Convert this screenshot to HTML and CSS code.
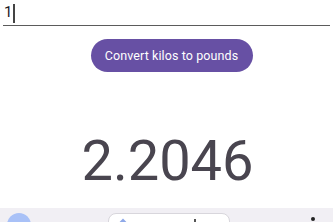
FILE: index.html
```html
<!doctype html>
<html lang="en">

<head>
	<meta charset="UTF-8" />
	<meta name="viewport" content="width=device-width, initial-scale=1.0" />
	<title>Kilos to pounds</title>
	<link rel="stylesheet" href="styles.css">
</head>

<body>
	<div class="screen">
		<div class="field">
			<span class="field-value">1</span><span class="caret"></span>
		</div>
		<div class="actions">
			<button class="convert-btn">Convert kilos to pounds</button>
		</div>
		<div class="result">2.2046</div>
	</div>
	<div class="bottom-bar">
		<div class="avatar"></div>
		<div class="search-pill">
			<svg class="pill-icon" width="10" height="10" viewBox="0 0 10 10">
				<path d="M2 6 L5 3 L8 6" fill="none" stroke="#8fa9e8" stroke-width="2" />
			</svg>
			<span class="pill-mark"></span>
		</div>
		<div class="menu-dot"></div>
	</div>
</body>

</html>
```

FILE: styles.css
```css
* {
	margin: 0;
	padding: 0;
	box-sizing: border-box;
}

body {
	font-family: Roboto, "Noto Sans", sans-serif;
	background-color: #ffffff;
	width: 333px;
	height: 222px;
	overflow: hidden;
	display: flex;
	flex-direction: column;
}

.screen {
	height: 208px;
	flex-shrink: 0;
	display: flex;
	flex-direction: column;
}

.field {
	margin: 0 3px;
	height: 26px;
	padding: 4px 0 0 1px;
	border-bottom: 1.5px solid #5b5b5b;
	display: flex;
	align-items: flex-start;
	font-size: 15px;
	color: #1c1b1f;
}

.field-value {
	line-height: 17px;
}

.caret {
	width: 1.5px;
	height: 19px;
	margin-left: 1px;
	background-color: #444;
}

.actions {
	display: flex;
	justify-content: center;
	margin-top: 13px;
	padding-left: 10px;
}

.convert-btn {
	width: 162px;
	height: 33px;
	border: none;
	border-radius: 17px;
	background-color: #6750a4;
	color: #ffffff;
	font-family: Roboto, sans-serif;
	font-weight: 400;
	font-size: 12.5px;
	letter-spacing: 0.1px;
}

.result {
	margin-top: 61px;
	text-align: center;
	font-size: 56px;
	line-height: 56px;
	color: #49454f;
	padding-left: 2px;
}

.bottom-bar {
	height: 14px;
	overflow: hidden;
	background-color: #f1eff4;
	display: flex;
	align-items: flex-start;
	padding-top: 5px;
}

.avatar {
	width: 24px;
	height: 24px;
	flex-shrink: 0;
	margin-left: 7px;
	border-radius: 50%;
	background-color: #a9c1f7;
}

.search-pill {
	width: 122px;
	height: 24px;
	flex-shrink: 0;
	margin-left: 77px;
	border: 1px solid #d8d6dc;
	border-radius: 8px;
	background-color: #ffffff;
	display: flex;
	align-items: flex-start;
	padding: 3px 0 0 9px;
}

.pill-mark {
	width: 2px;
	height: 4px;
	margin-left: 66px;
	margin-top: 2px;
	background-color: #555;
}

.menu-dot {
	width: 4px;
	height: 4px;
	flex-shrink: 0;
	margin-left: 81px;
	margin-top: 4px;
	border-radius: 50%;
	background-color: #222;
}
```
